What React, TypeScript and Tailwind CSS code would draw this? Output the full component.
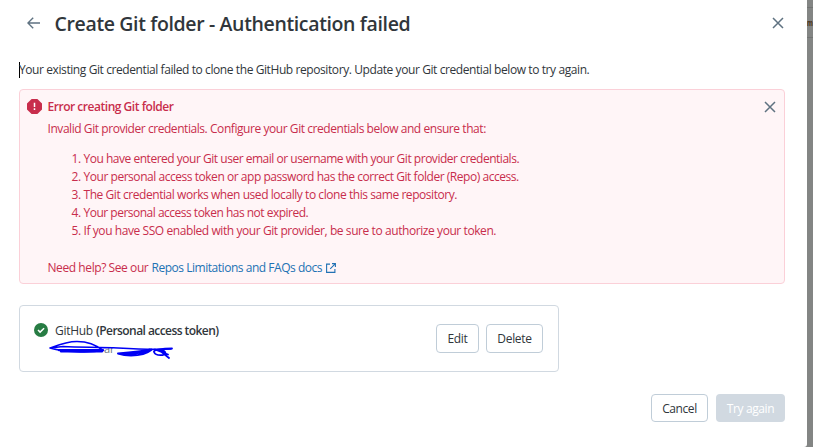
import type { ReactNode } from "react";

const requirements = [
  { text: "You have entered your Git user email or username with your Git provider credentials.", tracking: "tracking-[-0.48px]" },
  { text: "Your personal access token or app password has the correct Git folder (Repo) access.", tracking: "tracking-[-0.46px]" },
  { text: "The Git credential works when used locally to clone this same repository.", tracking: "tracking-[-0.44px]" },
  { text: "Your personal access token has not expired.", tracking: "tracking-[-0.5px]" },
  { text: "If you have SSO enabled with your Git provider, be sure to authorize your token.", tracking: "tracking-[-0.42px]" },
];

const CloseIcon = () => (
  <svg className="block size-3" viewBox="0 0 12 12" fill="none" stroke="#5f7281" strokeWidth="1.5">
    <path d="M1 1l10 10M11 1L1 11" />
  </svg>
);

const BackIcon = () => (
  <svg className="block h-3 w-[13px]" viewBox="0 0 13 12" fill="none" stroke="#5f7281" strokeWidth="1.4">
    <path d="M13 6H1M6.2 .7L.9 6l5.3 5.3" />
  </svg>
);

const DangerIcon = () => (
  <svg className="block size-[15px]" viewBox="0 0 15 15">
    <path d="M4.6 0h5.8L15 4.6v5.8L10.4 15H4.6L0 10.4V4.6z" fill="#c82d4c" />
    <path d="M7.5 3.8v4.1M7.5 9.3v1.6" stroke="#fff" strokeWidth="1.5" />
  </svg>
);

const CheckIcon = () => (
  <svg className="block size-[14px]" viewBox="0 0 14 14">
    <circle cx="7" cy="7" r="7" fill="#277c43" />
    <path d="M4 7l2.1 2.1L10.1 5.2" fill="none" stroke="#fff" strokeWidth="1.5" />
  </svg>
);

const ExternalIcon = () => (
  <svg className="block size-[10px]" viewBox="0 0 10 10" fill="none" stroke="#2272b4" strokeWidth="1.1">
    <path d="M4 1.1H.6v8.3h8.3V6M6 .6h3.4V4M9.4.6L4.2 5.8" />
  </svg>
);

// Pen marks crossing out the account name
const Scribble = () => (
  <svg className="absolute -left-[7px] -top-[2px] h-[22px] w-[130px]" viewBox="0 0 130 22" fill="none" stroke="#0000f5" strokeWidth="1.5" strokeLinecap="round">
    <path d="M2 11C10 8 18 4.5 29 4.5c12 0 20 4 26 9C41 16 14 15 2 11l13-1.5c18 1 37 .5 55 1.5 16 1 34 2 53 1" />
    <path d="M11 13.2h44M13 14.4h41" strokeWidth="2.2" />
    <path d="M70 16.5c13-1 24-2 34-4-5 4-13 6-21 6-6 0-10-1-13-2 12 1 23 0 32-4" strokeWidth="2" />
    <path d="M124 11.5c-9 0-19 1-18 3.5s5 3.5 9 3c4-1 3-5-4-5l10 8M107 12.5l13 5" strokeWidth="1.8" />
  </svg>
);

const Button = ({ children, className }: { children: ReactNode; className: string }) => (
  <button className={`flex items-center justify-center rounded-[4px] pt-px text-[12px] ${className}`}>
    {children}
  </button>
);

export default function App() {
  return (
    <div className="flex h-[447px] w-[813px] overflow-hidden bg-[#838584] font-['Open_Sans','Noto_Sans',sans-serif] text-[12px] text-[#30363b]">
      <main className="flex w-[807px] shrink-0 flex-col rounded-br-[3px] bg-white pl-[19px] pr-[22px]">
        <header className="flex h-[47px] shrink-0 items-center pl-2">
          <div className="-mt-px">
            <BackIcon />
          </div>
          <h1 className="ml-[14.5px] whitespace-nowrap text-[19.5px] font-semibold tracking-[-0.36px]">
            Create Git folder - Authentication failed
          </h1>
          <button className="-mt-px ml-auto pr-px" aria-label="Close">
            <CloseIcon />
          </button>
        </header>

        <p className="mt-[14px] flex h-[18px] shrink-0 items-center whitespace-nowrap">
          <span className="-mr-px h-4 w-px bg-black" />
          <span className="tracking-[-0.41px]">
            Your existing Git credential failed to clone the GitHub repository. Update your Git credential below to try again.
          </span>
        </p>

        <section className="mt-[10px] flex h-[195px] shrink-0 items-start rounded-[4px] border border-[#fbd0d8] bg-[#fff5f7] px-[7px] text-[#c82d4c]">
          <div className="mt-[9px]">
            <DangerIcon />
          </div>
          <div className="ml-[5.5px] flex grow flex-col whitespace-nowrap">
            <h2 className="mt-2 h-[18px] font-semibold leading-[18px] tracking-[-0.47px]">Error creating Git folder</h2>
            <p className="mt-1 leading-[18px] tracking-[-0.44px]">
              Invalid Git provider credentials. Configure your Git credentials below and ensure that:
            </p>
            <ol className="mt-3 pl-6">
              {requirements.map((item, index) => (
                <li key={item.text} className="flex h-[18px] items-center leading-[18px]">
                  <span className="w-3 tracking-[-0.5px]">{index + 1}.</span>
                  <span className={item.tracking}>{item.text}</span>
                </li>
              ))}
            </ol>
            <p className="mt-[19px] flex items-center leading-[18px]">
              <span className="w-[104px] tracking-[-0.42px]">Need help? See our</span>
              <a className="flex items-center text-[#2272b4]">
                <span className="w-[174px] tracking-[-0.47px]">Repos Limitations and FAQs docs</span>
                <ExternalIcon />
              </a>
            </p>
          </div>
          <button className="mr-px mt-[11px]" aria-label="Dismiss">
            <CloseIcon />
          </button>
        </section>

        <section className="mt-[21px] flex h-[67px] w-[540px] shrink-0 items-center rounded-[4px] border border-[#d1d9e1] pl-[14px] pr-[15px]">
          <div className="-mt-[17px]">
            <CheckIcon />
          </div>
          <div className="ml-[7px] whitespace-nowrap">
            <p className="flex h-[18px] pt-px leading-[18px]">
              <span className="w-[41px] tracking-[-0.3px]">GitHub</span>
              <span className="font-semibold tracking-[-0.56px]">(Personal access token)</span>
            </p>
            <div className="relative h-[18px] pl-[49px] text-[11px] leading-[19px] text-[#6b7680]">
              ar
              <Scribble />
            </div>
          </div>
          <div className="ml-auto flex gap-[7px]">
            <Button className="h-[29px] w-[43px] border border-[#c0cdd8] tracking-[-0.3px]">Edit</Button>
            <Button className="h-[29px] w-[57px] border border-[#c0cdd8] tracking-[-0.3px]">Delete</Button>
          </div>
        </section>

        <footer className="mt-[22px] flex shrink-0 justify-end gap-2">
          <Button className="h-7 w-[57px] border border-[#c0cdd8] tracking-[-0.4px]">Cancel</Button>
          <Button className="h-7 w-[69px] bg-[#d1d9e1] tracking-[-0.4px] text-white">Try again</Button>
        </footer>
      </main>

      {/* Slice of the dimmed page behind the dialog */}
      <aside className="w-[6px]">
        <div className="mt-[7px] flex h-[31px] items-center border-y border-[#727473] text-[6px] font-bold leading-none text-[#4a3216]">
          <span className="scale-y-150">m</span>
        </div>
      </aside>
    </div>
  );
}
